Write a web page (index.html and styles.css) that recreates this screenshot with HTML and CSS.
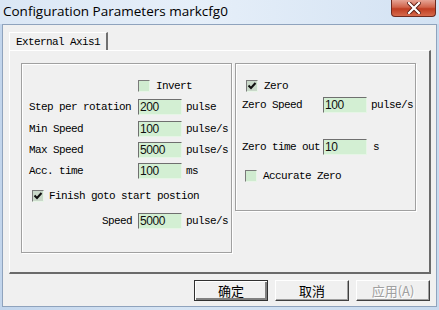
FILE: index.html
```html
<!DOCTYPE html>
<html lang="en">
<head>
    <meta charset="UTF-8">
    <title>Configuration Parameters markcfg0</title>
    <link rel="stylesheet" href="styles.css">
</head>
<body>
    <div class="window">
        <div class="titlebar">
            <span class="title">Configuration Parameters markcfg0</span>
            <span class="close">
                <svg width="14" height="12" viewBox="0 0 14 12">
                    <path d="M2 1 L12 11 M12 1 L2 11" stroke="#5a1c12" stroke-width="4" stroke-linecap="square"/>
                    <path d="M2 1 L12 11 M12 1 L2 11" stroke="#ffffff" stroke-width="2.2" stroke-linecap="square"/>
                </svg>
            </span>
        </div>
        <div class="client">
            <div class="tabs">
                <span class="tab">External Axis1</span>
            </div>
            <div class="panel">
                <div class="group group-left">
                    <div class="row row-invert">
                        <span class="check"></span><span>Invert</span>
                    </div>
                    <div class="row row-step">
                        <span class="label">Step per rotation</span><span class="field">200</span><span class="unit">pulse</span>
                    </div>
                    <div class="row row-min">
                        <span class="label">Min Speed</span><span class="field">100</span><span class="unit">pulse/s</span>
                    </div>
                    <div class="row row-max">
                        <span class="label">Max Speed</span><span class="field">5000</span><span class="unit">pulse/s</span>
                    </div>
                    <div class="row row-acc">
                        <span class="label">Acc. time</span><span class="field">100</span><span class="unit">ms</span>
                    </div>
                    <div class="row row-finish">
                        <span class="check checked"></span><span>Finish goto start postion</span>
                    </div>
                    <div class="row row-speed">
                        <span class="label label-right">Speed</span><span class="field">5000</span><span class="unit">pulse/s</span>
                    </div>
                </div>
                <div class="group group-right">
                    <div class="row row-zero">
                        <span class="check checked"></span><span>Zero</span>
                    </div>
                    <div class="row row-zspeed">
                        <span class="label">Zero Speed</span><span class="field">100</span><span class="unit">pulse/s</span>
                    </div>
                    <div class="row row-timeout">
                        <span class="label">Zero time out</span><span class="field">10</span><span class="unit unit-s">s</span>
                    </div>
                    <div class="row row-accurate">
                        <span class="check"></span><span>Accurate Zero</span>
                    </div>
                </div>
            </div>
            <div class="buttons">
                <button class="btn btn-default">确定</button>
                <button class="btn">取消</button>
                <button class="btn btn-disabled">应用(A)</button>
            </div>
        </div>
    </div>
</body>
</html>
```

FILE: styles.css
```css
body {
    margin: 0;
    padding: 0;
    background-color: #ffffff;
}
.window {
    width: 439px;
    height: 310px;
    box-sizing: border-box;
    background: linear-gradient(to right, #c2d5ec, #d7e5f4 40%, #c9daee);
    display: flex;
    flex-direction: column;
    overflow: hidden;
}
.titlebar {
    height: 24px;
    display: flex;
    justify-content: space-between;
    align-items: flex-start;
    background: linear-gradient(to right, #dbe7f5, #e6eff9 45%, #d3e2f3);
}
.title {
    font-family: "Open Sans", "Noto Sans", sans-serif;
    font-size: 13.5px;
    color: #000000;
    margin-left: 3px;
    margin-top: 2px;
    line-height: 18px;
}
.close {
    width: 45px;
    height: 17px;
    margin-right: 3px;
    box-sizing: border-box;
    border: 1px solid #6e2a1f;
    border-top: none;
    border-radius: 0 0 4px 4px;
    background: linear-gradient(#e6a495, #d0634a 45%, #bf3d22 55%, #d66a4c);
    display: flex;
    align-items: center;
    justify-content: center;
}
.client {
    flex: 1;
    margin: 0 2px 3px 2px;
    border: 1px solid #8fa3bd;
    background-color: #f0f0f0;
    display: flex;
    flex-direction: column;
}
.tabs {
    padding: 7px 0 0 6px;
    display: flex;
}
.tab {
    height: 18px;
    width: 99px;
    box-sizing: border-box;
    border-top: 1px solid #ffffff;
    border-left: 1px solid #ffffff;
    border-right: 2px solid #707070;
    padding-left: 6px;
    font-family: "Liberation Mono", "DejaVu Sans Mono", monospace;
    font-size: 11px;
    letter-spacing: -0.6px;
    line-height: 18px;
    color: #000000;
}
.panel {
    height: 224px;
    margin: 0 5px 0 6px;
    box-sizing: border-box;
    border-top: 1px solid #ffffff;
    border-left: 1px solid #ffffff;
    border-right: 2px solid #6a6a6a;
    border-bottom: 2px solid #6a6a6a;
    padding: 12px 0 0 11px;
    display: flex;
    align-items: flex-start;
    gap: 3px;
}
.group {
    box-sizing: border-box;
    border: 1px solid #a0a0a0;
    box-shadow: inset 1px 1px #ffffff, 1px 1px #ffffff;
    display: flex;
    flex-direction: column;
    padding-top: 14px;
}
.group-left {
    width: 211px;
    height: 190px;
    padding-left: 7px;
}
.group-right {
    width: 181px;
    height: 148px;
    padding-left: 6px;
}
.row {
    height: 16px;
    display: flex;
    align-items: center;
    font-family: "Liberation Mono", "DejaVu Sans Mono", monospace;
    font-size: 11px;
    letter-spacing: -0.6px;
    color: #000000;
    white-space: nowrap;
}
.group-left .label {
    width: 109px;
}
.group-right .label {
    width: 81px;
}
.label-right {
    text-align: right;
    box-sizing: border-box;
    padding-right: 6px;
}
.field {
    width: 44px;
    height: 16px;
    box-sizing: border-box;
    border-top: 1px solid #6f6f6f;
    border-left: 1px solid #6f6f6f;
    border-right: 1px solid #e6f5e6;
    border-bottom: 1px solid #e6f5e6;
    background-color: #d3efd3;
    padding-left: 1px;
    font-family: "Liberation Sans", Arial, sans-serif;
    font-size: 12px;
    letter-spacing: -0.4px;
    line-height: 14px;
    color: #101010;
}
.unit {
    margin-left: 4px;
}
.unit-s {
    margin-left: 6px;
}
.check {
    width: 12px;
    height: 12px;
    box-sizing: border-box;
    border-top: 1px solid #7a7a7a;
    border-left: 1px solid #7a7a7a;
    border-right: 1px solid #e8f5e8;
    border-bottom: 1px solid #e8f5e8;
    background-color: #d0ebd0;
    margin-right: 6px;
}
.check.checked {
    background: #c9d8c9 url("data:image/svg+xml,%3Csvg xmlns='http://www.w3.org/2000/svg' width='10' height='10' viewBox='0 0 10 10'%3E%3Cpath d='M1.5 4.5 L4 7 L8.5 2' fill='none' stroke='%23101010' stroke-width='2'/%3E%3C/svg%3E") center no-repeat;
}
.row-invert {
    padding-left: 109px;
}
.row-step { margin-top: 5px; }
.row-min { margin-top: 6px; }
.row-max { margin-top: 5px; }
.row-acc { margin-top: 5px; }
.row-finish {
    margin-top: 9px;
    padding-left: 3px;
}
.row-finish .check {
    margin-right: 5px;
}
.row-speed { margin-top: 9px; }
.row-zero {
    padding-left: 4px;
}
.row-zspeed { margin-top: 3px; }
.row-timeout { margin-top: 26px; }
.row-accurate {
    margin-top: 13px;
    padding-left: 3px;
}
.buttons {
    display: flex;
    justify-content: flex-end;
    gap: 7px;
    padding: 6px 6px 0 0;
}
.btn {
    width: 74px;
    height: 21px;
    box-sizing: border-box;
    background-color: #f0f0f0;
    border: none;
    border-top: 1px solid #ffffff;
    border-left: 1px solid #ffffff;
    border-right: 1px solid #404040;
    border-bottom: 1px solid #404040;
    box-shadow: inset -1px -1px #a0a0a0;
    font-family: "Noto Sans CJK SC", sans-serif;
    font-size: 13px;
    line-height: 17px;
    padding: 0;
    color: #000000;
}
.btn-default {
    border: 1px solid #303030;
    box-shadow: inset 1px 1px #ffffff, inset -2px -2px #808080;
}
.btn-disabled {
    color: #a0a0a0;
    text-shadow: 1px 1px #ffffff;
}
```
